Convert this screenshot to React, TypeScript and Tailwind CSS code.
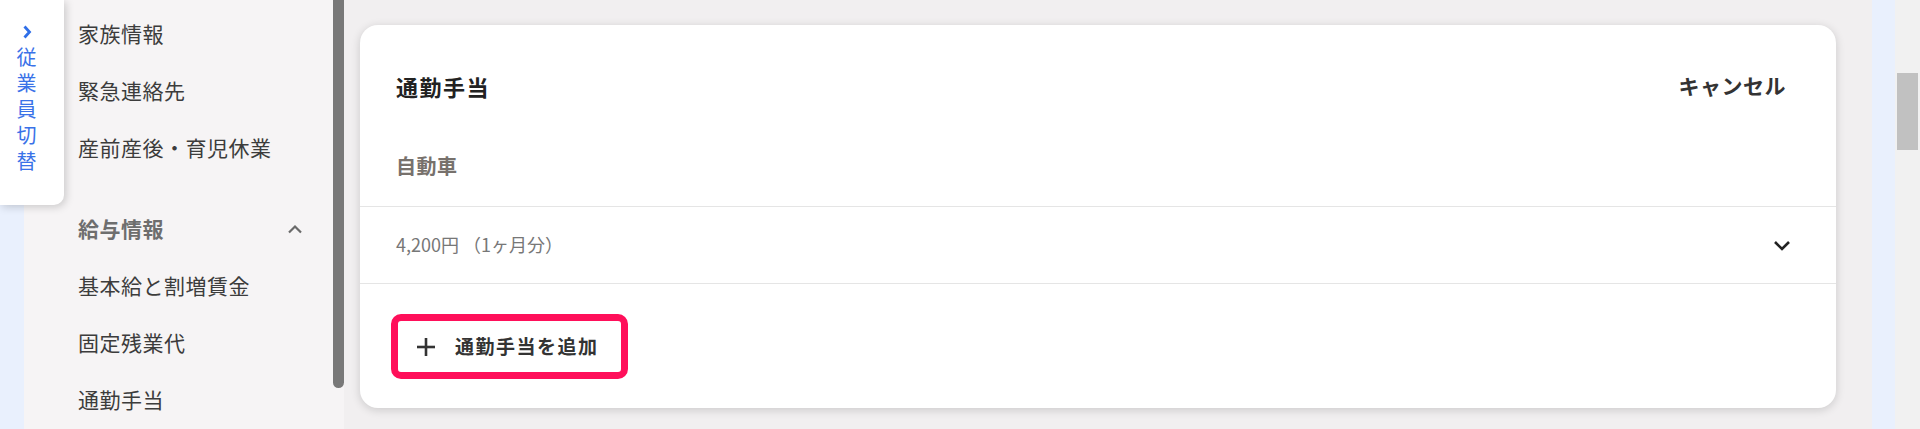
import React from "react";

const NavItem = ({ label }: { label: string }) => (
  <div className="flex h-[57px] items-center pl-[54px] text-[21px] tracking-[0.5px] text-[#3c3c3c]">
    {label}
  </div>
);

export default function App() {
  return (
    <div className="relative flex h-[429px] w-[1920px] overflow-hidden bg-[#f1eff0] font-['Noto_Sans_CJK_JP',sans-serif]">
      <div className="w-[24px] shrink-0 bg-[#e9f0fd]" />
      <aside className="flex w-[320px] shrink-0 bg-[#f6f4f5]">
        <nav className="flex-1 pt-[5px]">
          <NavItem label="家族情報" />
          <NavItem label="緊急連絡先" />
          <NavItem label="産前産後・育児休業" />
          <div className="mt-[24px] flex h-[57px] items-center justify-between pl-[54px] pr-[30px]">
            <span className="text-[21px] font-bold tracking-[0.5px] text-[#6e6e6e]">給与情報</span>
            <svg width="16" height="10" viewBox="0 0 16 10" fill="none">
              <polyline points="2,8.5 8,2.5 14,8.5" stroke="#6a6a6a" strokeWidth="2.2" />
            </svg>
          </div>
          <NavItem label="基本給と割増賃金" />
          <NavItem label="固定残業代" />
          <NavItem label="通勤手当" />
        </nav>
        <div className="w-[11px] shrink-0">
          <div className="h-[388px] rounded-b-full bg-[#787878]" />
        </div>
      </aside>
      <main className="flex-1 pl-[16px] pr-[36px] pt-[25px]">
        <div className="h-[383px] rounded-[18px] bg-white shadow-[0_2px_10px_rgba(0,0,0,0.16)]">
          <div className="border-b border-[#e5e5e5] pb-[27px] pl-[36px] pr-[50px] pt-[48px]">
            <div className="flex h-[26px] items-center justify-between">
              <span className="text-[22px] font-bold tracking-[1.5px] text-[#222]">通勤手当</span>
              <span className="text-[21px] font-bold tracking-[0.5px] text-[#333]">キャンセル</span>
            </div>
            <div className="mt-[54px] flex h-[26px] items-center text-[20px] font-bold tracking-[0.5px] text-[#77716c]">
              自動車
            </div>
          </div>
          <div className="flex h-[77px] items-center justify-between border-b border-[#e5e5e5] pl-[36px] pr-[45px]">
            <span className="-mt-[2px] text-[18px] text-[#777]">4,200円 （1ヶ月分）</span>
            <svg width="18" height="11" viewBox="0 0 18 11" fill="none">
              <polyline points="2,2 9,9 16,2" stroke="#222" strokeWidth="2.6" />
            </svg>
          </div>
          <div className="pl-[31px] pt-[30px]">
            <button className="flex h-[65px] w-[237px] items-center rounded-[10px] border-[7px] border-[#ff0f5a] bg-white pl-[19px]">
              <svg width="18" height="18" viewBox="0 0 18 18" fill="none">
                <line x1="9" y1="0" x2="9" y2="18" stroke="#333" strokeWidth="2.6" />
                <line x1="0" y1="9" x2="18" y2="9" stroke="#333" strokeWidth="2.6" />
              </svg>
              <span className="ml-[20px] text-[19px] font-bold tracking-[1.5px] text-[#333]">通勤手当を追加</span>
            </button>
          </div>
        </div>
      </main>
      <div className="w-[23px] shrink-0 bg-[#e9f0fd]" />
      <div className="relative w-[25px] shrink-0 bg-[#f1f1f1]">
        <div className="absolute left-[2px] top-[73px] h-[77px] w-[21px] bg-[#c1c1c1]" />
      </div>
      <div className="absolute left-0 top-0 flex h-[205px] w-[64px] flex-col items-center rounded-br-[10px] bg-white pr-[11px] pt-[25px] shadow-[2px_2px_8px_rgba(0,0,0,0.18)]">
        <svg width="10" height="14" viewBox="0 0 10 14" fill="none">
          <polyline points="2.5,1.5 7.5,7 2.5,12.5" stroke="#2f6fe8" strokeWidth="2.8" />
        </svg>
        <div className="mt-[5px] flex flex-col items-center text-[20px] leading-[26px] text-[#3a72e8]">
          <span>従</span>
          <span>業</span>
          <span>員</span>
          <span>切</span>
          <span>替</span>
        </div>
      </div>
    </div>
  );
}
